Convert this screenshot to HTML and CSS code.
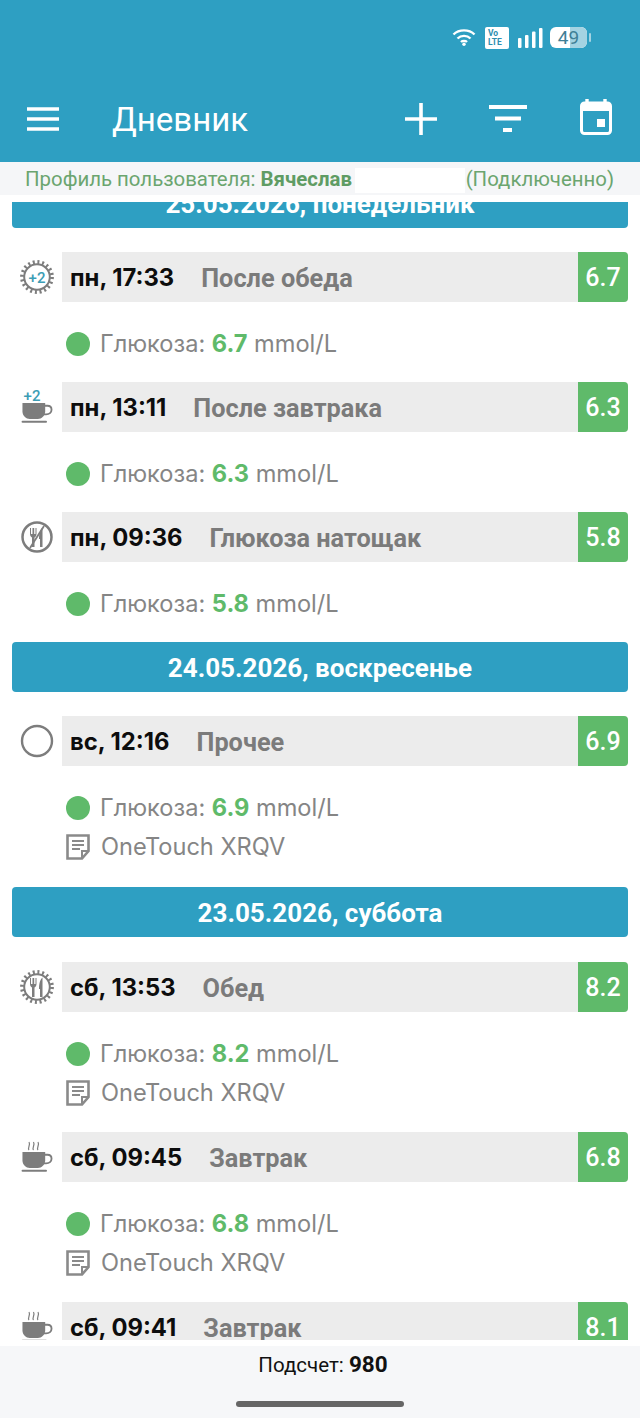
FILE: index.html
```html
<!DOCTYPE html>
<html lang="ru">
<head>
<meta charset="utf-8">
<title>Дневник</title>
<link rel="stylesheet" href="styles.css">
</head>
<body>
<svg class="defs" width="0" height="0" aria-hidden="true">
  <defs>
    <symbol id="gear" viewBox="0 0 34 34">
      <circle cx="17" cy="17" r="12.800" fill="none" stroke="#7d7d7d" stroke-width="2"/>
      <circle cx="17" cy="17" r="15" fill="none" stroke="#7d7d7d" stroke-width="3.800" stroke-dasharray="2 2.710"/>
    </symbol>
    <symbol id="cup" viewBox="0 0 34 22">
      <path d="M1 0H26V9C26 14 22 17.500 18 17.500H9C5 17.500 1 14 1 9Z" fill="#7d7d7d"/>
      <path d="M25 3H28.500C31.500 3 33 5 33 7.500C33 10.500 30.500 12.500 27 12.500H24" fill="none" stroke="#7d7d7d" stroke-width="2"/>
      <rect x="0" y="19.500" width="28" height="2.200" rx="1.100" fill="#7d7d7d"/>
    </symbol>
    <symbol id="cutlery" viewBox="0 0 34 34">
      <path d="M10 8V14C10 16 11 17 12 17.500V27H14.500V17.500C15.500 17 16.500 16 16.500 14V8H15.500V14H14.200V8H12.500V14H11V8Z" fill="#7d7d7d"/>
      <path d="M20 27H22.500V7.500C20.500 9 19 13 19 19H20Z" fill="#7d7d7d"/>
    </symbol>
    <symbol id="note" viewBox="0 0 24 26">
      <path d="M1.500 1.500H22.500V17L16 24.500H1.500Z" fill="none" stroke="#8a8a8a" stroke-width="2.600"/>
      <path d="M16 24V17H22" fill="none" stroke="#8a8a8a" stroke-width="2"/>
      <path d="M6 7H18M6 11H18M6 15H14" stroke="#8a8a8a" stroke-width="1.800"/>
    </symbol>
  </defs>
</svg>

<div class="screen">
  <header class="header">
    <div class="status">
      <svg class="wifi" viewBox="0 0 24 18" width="24" height="18">
        <path d="M1.500 6.500C7 1 17 1 22.500 6.500M5.500 10.500C9 7 15 7 18.500 10.500M9 14C10.500 12.500 13.500 12.500 15 14" fill="none" stroke="#fff" stroke-width="2.400"/>
        <circle cx="12" cy="16.200" r="1.700" fill="#fff"/>
      </svg>
      <div class="volte"><span>Vo</span><span>LTE</span></div>
      <svg class="signal" viewBox="0 0 25 20" width="25" height="20">
        <rect x="0" y="10" width="3.500" height="10" rx="1" fill="#fff"/>
        <rect x="7" y="7" width="3.500" height="13" rx="1" fill="#fff"/>
        <rect x="14" y="3.500" width="3.500" height="16.500" rx="1" fill="#fff"/>
        <rect x="21" y="0" width="3.500" height="20" rx="1" fill="#fff"/>
      </svg>
      <div class="battery"><div class="battery-fill"></div><span class="battery-num">49</span></div>
      <div class="battery-tip"></div>
    </div>
    <div class="toolbar">
      <svg class="tool-menu" viewBox="0 0 34 26" width="34" height="26">
        <path d="M1 3H33M1 13H33M1 23H33" stroke="#fff" stroke-width="3.400"/>
      </svg>
      <h1 class="title">Дневник</h1>
      <svg class="tool-plus" viewBox="0 0 32 32" width="32" height="32">
        <path d="M16 0V32M0 16H32" stroke="#fff" stroke-width="3.600"/>
      </svg>
      <svg class="tool-filter" viewBox="0 0 38 28" width="38" height="28">
        <path d="M0 2H38M6 13.500H32M14 25H23" stroke="#fff" stroke-width="4"/>
      </svg>
      <svg class="tool-cal" viewBox="0 0 32 36" width="32" height="36">
        <path d="M7 0V5M25 0V5" stroke="#fff" stroke-width="3.400"/>
        <rect x="1.500" y="4" width="29" height="30.500" rx="3" fill="none" stroke="#fff" stroke-width="3"/>
        <rect x="1.500" y="4" width="29" height="8" fill="#fff"/>
        <rect x="17" y="20" width="8" height="8" fill="#fff"/>
      </svg>
    </div>
  </header>

  <div class="profile">
    <span>Профиль пользователя: <b>Вячеслав</b></span>
    <span class="redact"></span>
    <span>(Подключенно)</span>
  </div>

  <main class="list">
    <div class="list-inner">
      <div class="date">25.05.2026, понедельник</div>

      <section class="entry">
        <div class="row">
          <svg class="ico" viewBox="0 0 34 34" width="34" height="34"><use href="#gear"/><text x="17" y="22.500" class="plus" text-anchor="middle">+2</text></svg>
          <div class="bar"><span class="time">пн, 17:33</span><span class="kind">После обеда</span><span class="val">6.7</span></div>
        </div>
        <div class="line gl"><i class="dot"></i>Глюкоза: <b>6.7</b> mmol/L</div>
      </section>

      <section class="entry">
        <div class="row">
          <svg class="ico" viewBox="0 0 34 40" width="34" height="40"><text x="12" y="14" class="plus" text-anchor="middle">+2</text><use href="#cup" y="16" width="34" height="20"/></svg>
          <div class="bar"><span class="time">пн, 13:11</span><span class="kind">После завтрака</span><span class="val">6.3</span></div>
        </div>
        <div class="line gl"><i class="dot"></i>Глюкоза: <b>6.3</b> mmol/L</div>
      </section>

      <section class="entry">
        <div class="row">
          <svg class="ico" viewBox="0 0 34 34" width="34" height="34"><circle cx="17" cy="17" r="14.500" fill="none" stroke="#7d7d7d" stroke-width="2.500"/><use href="#cutlery"/><path d="M24 6L10 28" stroke="#7d7d7d" stroke-width="1.800"/></svg>
          <div class="bar"><span class="time">пн, 09:36</span><span class="kind">Глюкоза натощак</span><span class="val">5.8</span></div>
        </div>
        <div class="line gl"><i class="dot"></i>Глюкоза: <b>5.8</b> mmol/L</div>
      </section>

      <div class="date">24.05.2026, воскресенье</div>

      <section class="entry">
        <div class="row">
          <svg class="ico" viewBox="0 0 34 34" width="34" height="34"><circle cx="17" cy="17" r="15" fill="none" stroke="#7d7d7d" stroke-width="2.400"/></svg>
          <div class="bar"><span class="time">вс, 12:16</span><span class="kind">Прочее</span><span class="val">6.9</span></div>
        </div>
        <div class="line gl"><i class="dot"></i>Глюкоза: <b>6.9</b> mmol/L</div>
        <div class="line dev"><svg class="note" viewBox="0 0 24 26" width="24" height="26"><use href="#note"/></svg>OneTouch XRQV</div>
      </section>

      <div class="date date-wide">23.05.2026, суббота</div>

      <section class="entry">
        <div class="row">
          <svg class="ico" viewBox="0 0 34 34" width="34" height="34"><use href="#gear"/><use href="#cutlery"/></svg>
          <div class="bar"><span class="time">сб, 13:53</span><span class="kind">Обед</span><span class="val">8.2</span></div>
        </div>
        <div class="line gl"><i class="dot"></i>Глюкоза: <b>8.2</b> mmol/L</div>
        <div class="line dev"><svg class="note" viewBox="0 0 24 26" width="24" height="26"><use href="#note"/></svg>OneTouch XRQV</div>
      </section>

      <section class="entry">
        <div class="row">
          <svg class="ico" viewBox="0 0 34 40" width="34" height="40"><path d="M9 13C7 11 11 8 9 5M13.500 13C11.500 11 15.500 8 13.500 5M18 13C16 11 20 8 18 5" fill="none" stroke="#7d7d7d" stroke-width="1.200"/><use href="#cup" y="15" width="34" height="20"/></svg>
          <div class="bar"><span class="time">сб, 09:45</span><span class="kind">Завтрак</span><span class="val">6.8</span></div>
        </div>
        <div class="line gl"><i class="dot"></i>Глюкоза: <b>6.8</b> mmol/L</div>
        <div class="line dev"><svg class="note" viewBox="0 0 24 26" width="24" height="26"><use href="#note"/></svg>OneTouch XRQV</div>
      </section>

      <section class="entry">
        <div class="row">
          <svg class="ico" viewBox="0 0 34 40" width="34" height="40"><path d="M9 13C7 11 11 8 9 5M13.500 13C11.500 11 15.500 8 13.500 5M18 13C16 11 20 8 18 5" fill="none" stroke="#7d7d7d" stroke-width="1.200"/><use href="#cup" y="15" width="34" height="20"/></svg>
          <div class="bar"><span class="time">сб, 09:41</span><span class="kind">Завтрак</span><span class="val">8.1</span></div>
        </div>
      </section>
    </div>
  </main>

  <footer class="footer">
    <div class="count">Подсчет: <b>980</b></div>
    <div class="home"></div>
  </footer>
</div>
</body>
</html>
```

FILE: styles.css
```css
* { box-sizing: border-box; }
html, body { margin: 0; padding: 0; background: #fff; }
.defs { display: block; height: 0; }
.screen {
  width: 640px;
  height: 1418px;
  display: flex;
  flex-direction: column;
  overflow: hidden;
  font-family: Inter, "Liberation Sans", sans-serif;
}

/* Header */
.header { height: 162px; background: #2e9fc2; flex: none; }
.status {
  height: 92px;
  padding: 27px 49px 0 0;
  display: flex;
  justify-content: flex-end;
  align-items: flex-start;
}
.wifi { margin-top: 1px; }
.volte {
  width: 24px;
  height: 22px;
  margin-left: 9px;
  background: #fff;
  border-radius: 2px;
  color: #2e8fb0;
  font: 700 8.500px/9px "Roboto", sans-serif;
  display: flex;
  flex-direction: column;
  padding: 2px 0 0 3px;
}
.signal { margin: 1px 0 0 9px; }
.battery {
  position: relative;
  width: 37px;
  height: 21px;
  margin-left: 7px;
  border-radius: 6px;
  background: #fff;
  overflow: hidden;
  text-align: center;
  color: #3f7f96;
  font: 400 19px/21px "Roboto", sans-serif;
}
.battery-fill {
  position: absolute;
  top: 0;
  right: 0;
  bottom: 0;
  width: 17px;
  background: #a4d3e2;
}
.battery-num { position: relative; }
.battery-tip {
  width: 2px;
  height: 9px;
  margin: 6px 0 0 2px;
  background: #a4d3e2;
  border-radius: 1px;
}
.toolbar {
  height: 70px;
  display: flex;
  align-items: center;
  padding: 0 0 16px 26px;
}
.title {
  margin: 2px 0 0 52px;
  width: 293px;
  font: 400 33px/40px Roboto, sans-serif;
  color: #fff;
}
.tool-filter { margin-left: 52px; }
.tool-cal { margin-left: 53px; margin-top: -4px; }

/* Profile */
.profile {
  flex: none;
  height: 33px;
  background: #f5f6f8;
  padding: 0 26px 0 25px;
  display: flex;
  align-items: center;
  color: #6ba56f;
  font: 400 20.400px/26px Roboto, sans-serif;
}
.profile b { font-weight: 700; color: #5f9c64; }
.redact {
  flex: 1;
  height: 25px;
  margin: 3px 1px 0 3px;
  background: #fff;
}

/* List */
.list {
  flex: none;
  height: 1138px;
  margin-top: 7px;
  overflow: hidden;
  padding: 0 12px;
}
.list-inner { margin-top: -24px; }
.date {
  height: 50px;
  background: #2e9fc2;
  border-radius: 4px;
  color: #fff;
  font: 700 26px/52px Roboto, "Liberation Sans", sans-serif;
  text-align: center;
  margin-bottom: 24px;
}
.date-wide { margin: 25px 0; }
.entry { margin-bottom: 24px; }
.row { display: flex; align-items: center; height: 50px; }
.ico { flex: none; margin-left: 8px; width: 34px; }
.plus { font: 500 15px Roboto, sans-serif; fill: #3c9db5; }
.bar {
  flex: none;
  width: 566px;
  height: 50px;
  margin-left: 8px;
  background: #ececec;
  display: flex;
  align-items: center;
  padding-left: 8px;
  border-radius: 0 4px 4px 0;
}
.time {
  margin-top: 2px;
  font: 700 23.800px/30px Inter, sans-serif;
  color: #0d0d0d;
}
.kind {
  margin: 3px 0 0 27px;
  font: 700 25.300px/30px Roboto, sans-serif;
  color: #7b7b7b;
}
.val {
  margin-left: auto;
  width: 50px;
  height: 50px;
  background: #5fba6a;
  border-radius: 0 4px 4px 0;
  color: #fff;
  font: 500 25px/52px Roboto, sans-serif;
  text-align: center;
}
.line {
  display: flex;
  align-items: center;
  margin-left: 54px;
  font: 400 23.600px/30px Inter, sans-serif;
  color: #858585;
  white-space: pre;
}
.gl { margin-top: 27px; margin-bottom: -1px; }
.gl b { color: #5fba6a; font-weight: 700; }
.dot {
  width: 24px;
  height: 24px;
  margin-right: 10px;
  border-radius: 50%;
  background: #5fba6a;
}
.dev { margin-top: 10px; }
.note { flex: none; margin-right: 11px; }

/* Footer */
.footer {
  flex: none;
  height: 72px;
  margin-top: 6px;
  background: #f6f7f9;
  display: flex;
  flex-direction: column;
  align-items: center;
}
.count {
  margin: 6px 0 0 6px;
  font: 400 20.500px/24px Roboto, sans-serif;
  color: #111;
}
.count b { font-weight: 700; font-size: 22.500px; }
.home {
  width: 168px;
  height: 6px;
  margin-top: 24px;
  border-radius: 3px;
  background: #666;
}
```
